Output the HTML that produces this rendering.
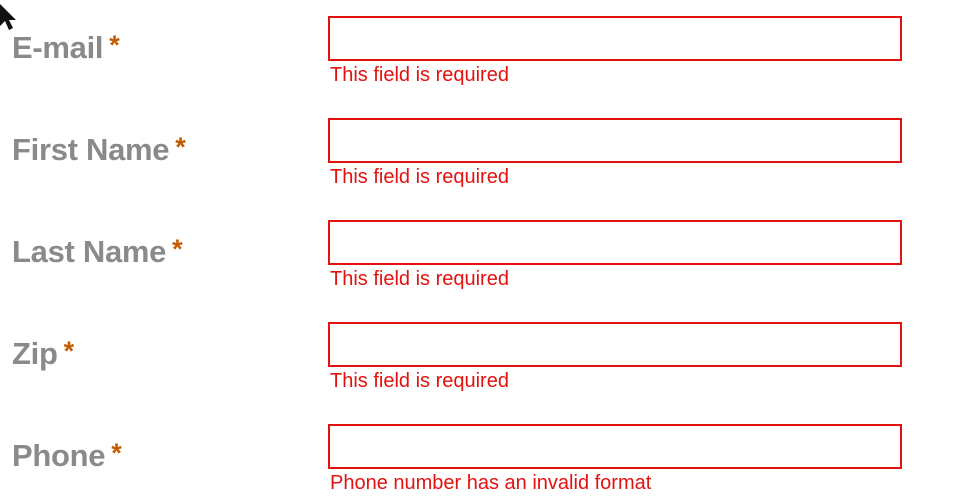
<!DOCTYPE html>
<html><head><style>
body{margin:0;width:960px;height:504px;background:#fff;font-family:"Liberation Sans",Arial,sans-serif;position:relative;overflow:hidden}
.lbl{position:absolute;left:12px;font-size:31px;font-weight:bold;color:#8a8a8a;line-height:1;letter-spacing:-0.3px}
.lbl span{color:#c45a00;font-size:27px;margin-left:6px;position:relative;top:-4px}
.box{position:absolute;left:328px;width:570px;height:41px;border:2px solid #e3120f;box-sizing:content-box}
.err{position:absolute;left:330px;font-size:20px;color:#e3120f;line-height:1}
</style></head><body>
<svg style="position:absolute;left:0;top:0" width="24" height="36"><path d="M0 4 L0 26 L5 21 L9 30 L13 28 L9 20 L16 20 Z" fill="#111"/></svg>
<div class="lbl" style="top:32px">E-mail<span>*</span></div>
<div class="box" style="top:16px"></div>
<div class="err" style="top:65px">This field is required</div>

<div class="lbl" style="top:134px">First Name<span>*</span></div>
<div class="box" style="top:118px"></div>
<div class="err" style="top:167px">This field is required</div>

<div class="lbl" style="top:236px">Last Name<span>*</span></div>
<div class="box" style="top:220px"></div>
<div class="err" style="top:269px">This field is required</div>

<div class="lbl" style="top:338px">Zip<span>*</span></div>
<div class="box" style="top:322px"></div>
<div class="err" style="top:371px">This field is required</div>

<div class="lbl" style="top:440px">Phone<span>*</span></div>
<div class="box" style="top:424px"></div>
<div class="err" style="top:473px">Phone number has an invalid format</div>
</body></html>
